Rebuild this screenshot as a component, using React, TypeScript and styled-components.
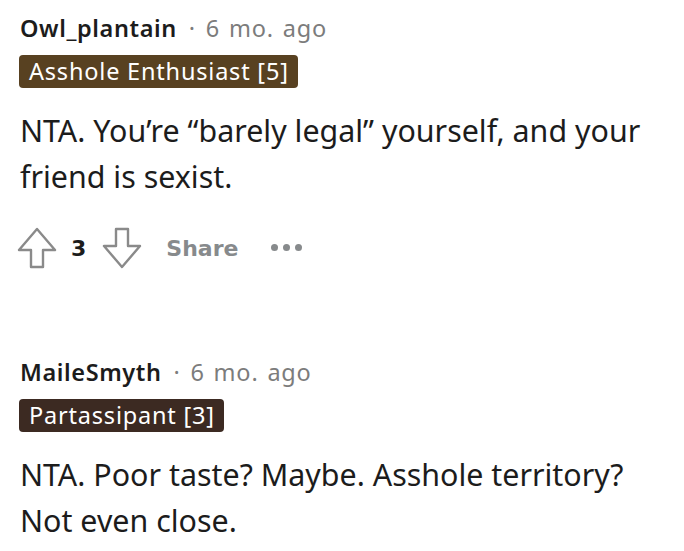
import React from "react";
import styled, { createGlobalStyle } from "styled-components";

const Global = createGlobalStyle`
  html, body { margin: 0; padding: 0; background: #ffffff; }
  body { font-family: "Noto Sans", sans-serif; }
`;

const Page = styled.div`
  display: flex;
  flex-direction: column;
  padding: 12px 20px 0 20px;
`;

const Comment = styled.article<{ $gap: number }>`
  display: flex;
  flex-direction: column;
  margin-bottom: ${(p) => p.$gap}px;
`;

const Meta = styled.div`
  display: flex;
  align-items: center;
  height: 32px;
  font-family: "Noto Sans", sans-serif;
  font-size: 23.5px;
  letter-spacing: 0.6px;
  line-height: 32px;
`;

const Author = styled.span`
  font-weight: 600;
  color: #1c1c1c;
`;

const Separator = styled.span`
  color: #7c7c7c;
  margin: 0 10px 0 12px;
`;

const Time = styled.span`
  color: #7c7c7c;
  word-spacing: 2px;
  letter-spacing: 0.8px;
`;

const Flair = styled.span<{ $bg: string }>`
  align-self: flex-start;
  margin-top: 11px;
  margin-left: -1px;
  height: 33px;
  padding: 0 9px 0 10px;
  border-radius: 4px;
  background: ${(p) => p.$bg};
  color: #ffffff;
  font-family: "Noto Sans", sans-serif;
  font-size: 23.5px;
  letter-spacing: 0.8px;
  line-height: 33px;
`;

const Body = styled.p`
  margin: 20px 0 0 0;
  font-size: 30.4px;
  line-height: 46px;
  color: #1c1c1c;
`;

const Actions = styled.div`
  display: flex;
  align-items: center;
  height: 44px;
  margin-top: 26px;
  margin-left: -3px;
  font-family: "DejaVu Sans", sans-serif;
`;

const Score = styled.span`
  font-weight: 700;
  font-size: 22px;
  color: #1c1c1c;
  margin: 0 16px 0 14px;
`;

const ShareBtn = styled.span`
  font-weight: 700;
  font-size: 22px;
  color: #878a8c;
  margin-left: 24px;
`;

const More = styled.span`
  display: flex;
  gap: 5px;
  margin-left: 33px;
  margin-top: -2px;
`;

const Dot = styled.span`
  width: 7px;
  height: 7px;
  border-radius: 50%;
  background: #878a8c;
`;

const Arrow = ({ down }: { down?: boolean }) => (
  <svg width="40" height="42" viewBox="0 0 40 42" style={down ? { transform: "rotate(180deg)" } : undefined}>
    <path
      d="M20 2 L38 23 L26 23 L26 40 L14 40 L14 23 L2 23 Z"
      fill="none"
      stroke="#8a8a8a"
      strokeWidth="2.4"
      strokeLinejoin="round"
    />
  </svg>
);

export default function App() {
  return (
    <Page>
      <Global />
      <Comment $gap={86}>
        <Meta>
          <Author>Owl_plantain</Author>
          <Separator>·</Separator>
          <Time>6 mo. ago</Time>
        </Meta>
        <Flair $bg="#584121">Asshole Enthusiast [5]</Flair>
        <Body>
          NTA. You’re “barely legal” yourself, and your friend is sexist.
        </Body>
        <Actions>
          <Arrow />
          <Score>3</Score>
          <Arrow down />
          <ShareBtn>Share</ShareBtn>
          <More>
            <Dot />
            <Dot />
            <Dot />
          </More>
        </Actions>
      </Comment>
      <Comment $gap={0}>
        <Meta>
          <Author>MaileSmyth</Author>
          <Separator>·</Separator>
          <Time>6 mo. ago</Time>
        </Meta>
        <Flair $bg="#3c2a22">Partassipant [3]</Flair>
        <Body>NTA. Poor taste? Maybe. Asshole territory? Not even close.</Body>
      </Comment>
    </Page>
  );
}
